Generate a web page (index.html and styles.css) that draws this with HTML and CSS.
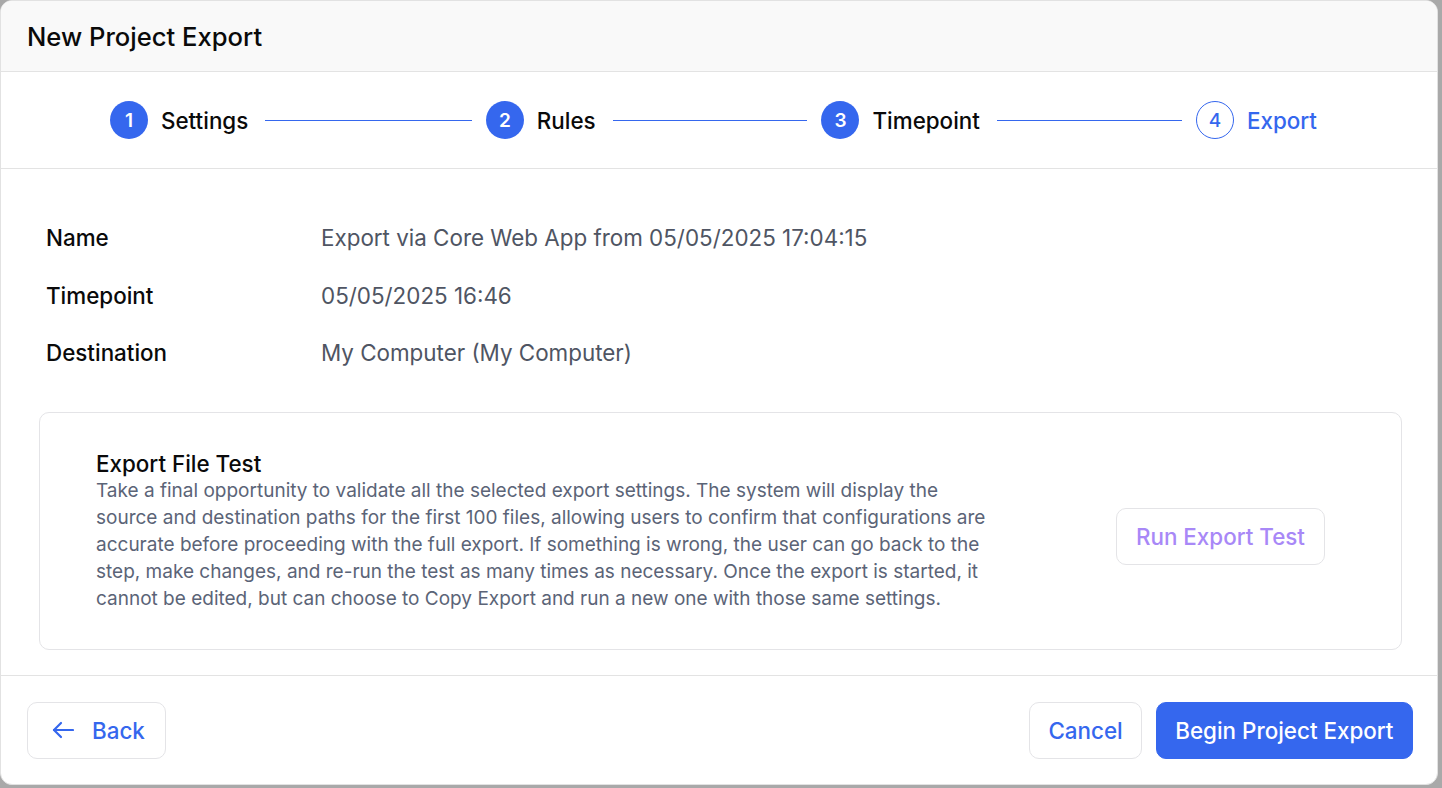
FILE: index.html
```html
<!DOCTYPE html>
<html lang="en">
<head>
<meta charset="utf-8">
<title>New Project Export</title>
<link rel="stylesheet" href="styles.css">
</head>
<body>
<div class="modal">
  <div class="modal-header">
    <h1 class="modal-title">New Project Export</h1>
  </div>
  <div class="stepper">
    <div class="step done"><span class="step-num">1</span><span class="step-label">Settings</span></div>
    <div class="step-line line-1"></div>
    <div class="step done"><span class="step-num">2</span><span class="step-label">Rules</span></div>
    <div class="step-line line-2"></div>
    <div class="step done"><span class="step-num">3</span><span class="step-label">Timepoint</span></div>
    <div class="step-line line-3"></div>
    <div class="step current"><span class="step-num">4</span><span class="step-label">Export</span></div>
  </div>
  <div class="modal-body">
    <div class="summary">
      <div class="summary-label">Name</div>
      <div class="summary-value">Export via Core Web App from 05/05/2025 17:04:15</div>
      <div class="summary-label">Timepoint</div>
      <div class="summary-value">05/05/2025 16:46</div>
      <div class="summary-label">Destination</div>
      <div class="summary-value">My Computer (My Computer)</div>
    </div>
    <div class="test-card">
      <div class="test-text">
        <div class="test-title">Export File Test</div>
        <p class="test-desc">Take a final opportunity to validate all the selected export settings. The system will display the source and destination paths for the first 100 files, allowing users to confirm that configurations are accurate before proceeding with the full export. If something is wrong, the user can go back to the step, make changes, and re-run the test as many times as necessary. Once the export is started, it cannot be edited, but can choose to Copy Export and run a new one with those same settings.</p>
      </div>
      <button class="btn btn-test">Run Export Test</button>
    </div>
  </div>
  <div class="modal-footer">
    <button class="btn btn-outline btn-back">
      <svg class="back-icon" width="22" height="18" viewBox="0 0 22 18" fill="none" stroke="currentColor" stroke-width="2.2" stroke-linecap="round" stroke-linejoin="round"><path d="M21 9H2"/><path d="M9 2L2 9l7 7"/></svg>
      <span>Back</span>
    </button>
    <div class="footer-right">
      <button class="btn btn-outline btn-cancel">Cancel</button>
      <button class="btn btn-primary">Begin Project Export</button>
    </div>
  </div>
</div>
</body>
</html>
```

FILE: styles.css
```css
* { box-sizing: border-box; }

html, body {
  margin: 0;
  padding: 0;
}

body {
  background: #a9a9a9;
  font-family: Inter, "Noto Sans", "Liberation Sans", sans-serif;
  width: 1442px;
  height: 788px;
  overflow: hidden;
}

.modal {
  width: 1438px;
  height: 785px;
  background: #ffffff;
  border: 1px solid #e2e2e2;
  border-radius: 12px;
  overflow: hidden;
  display: flex;
  flex-direction: column;
}

.modal-header {
  height: 71px;
  flex: none;
  background: #f9f9f9;
  border-bottom: 1px solid #e3e3e3;
  display: flex;
  align-items: center;
  padding-left: 26px;
}

.modal-title {
  margin: 0;
  font-size: 25.6px;
  font-weight: 500;
  color: #0a0a0a;
}

.stepper {
  height: 97px;
  flex: none;
  border-bottom: 1px solid #e3e3e3;
  display: flex;
  align-items: center;
  padding: 0 120px 0 109px;
}

.step {
  display: flex;
  align-items: center;
  gap: 13px;
}

.step-num {
  width: 38px;
  height: 38px;
  border-radius: 50%;
  display: flex;
  align-items: center;
  justify-content: center;
  font-size: 19px;
  font-weight: 600;
}

.step.done .step-num {
  background: #3567ee;
  color: #ffffff;
}

.step.current .step-num {
  border: 1.3px solid #3567ee;
  color: #3567ee;
  font-weight: 500;
}

.step-label {
  font-size: 22.4px;
  font-weight: 500;
  color: #0a0a0a;
}

.step.current .step-label {
  color: #3567ee;
}

.step-line {
  flex: 1 1 0;
  height: 1px;
  background: #3567ee;
  margin: 0 14px 0 17px;
}

.step-line.line-1 { flex-grow: 1.06; }
.step-line.line-2 { flex-grow: 1; }
.step-line.line-3 { flex-grow: 0.95; }

.modal-body {
  flex: 1;
  display: flex;
  flex-direction: column;
  padding: 40px 35px 0 38px;
}

.summary {
  display: grid;
  grid-template-columns: 275px 1fr;
  grid-auto-rows: 57.5px;
  align-items: center;
  padding-left: 7px;
  margin-bottom: 30px;
}

.summary-label {
  font-size: 22.4px;
  font-weight: 500;
  color: #0a0a0a;
}

.summary-value {
  font-size: 22.4px;
  font-weight: 400;
  color: #4f5563;
}

.test-card {
  height: 238px;
  border: 1px solid #e4e4e7;
  border-radius: 10px;
  display: flex;
  align-items: center;
  justify-content: space-between;
  padding: 0 76px 0 56px;
}

.test-text {
  width: 906px;
}

.test-title {
  font-size: 22.4px;
  font-weight: 500;
  color: #0a0a0a;
  line-height: 27px;
}

.test-desc {
  margin: 0;
  font-size: 19px;
  line-height: 27px;
  color: #5b6477;
}

.btn {
  font-family: inherit;
  height: 57px;
  border-radius: 10px;
  font-size: 22.4px;
  font-weight: 500;
  padding: 0 20px;
  cursor: pointer;
  display: inline-flex;
  align-items: center;
}

.btn-test {
  margin-top: 11px;
  background: #ffffff;
  border: 1px solid #e4e4e7;
  color: #a888f7;
  padding: 0 19px;
}

.modal-footer {
  flex: none;
  height: 109px;
  border-top: 1px solid #e3e3e3;
  display: flex;
  align-items: center;
  justify-content: space-between;
  padding: 0 24px 0 26px;
}

.btn-outline {
  background: #ffffff;
  border: 1px solid #e4e4e7;
  color: #3567ee;
}

.btn-back {
  padding: 0 20px 0 24px;
  gap: 18px;
}

.btn-cancel {
  padding: 0 18px;
}

.back-icon {
  display: block;
}

.footer-right {
  display: flex;
  gap: 14px;
}

.btn-primary {
  background: #3567ee;
  border: 1px solid #3567ee;
  color: #ffffff;
  padding: 0 18.5px;
}
```
